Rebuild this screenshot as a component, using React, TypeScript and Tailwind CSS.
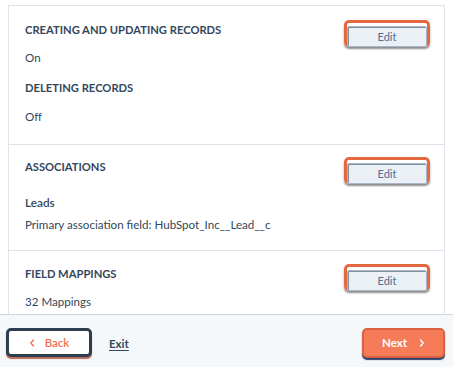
import React from "react";

function EditButton() {
  return (
    <div className="mt-[-2px] w-[86px] h-[27px] shrink-0 rounded-[5px] border-[3px] border-[#e5693f] shadow-[0_2px_2px_rgba(0,0,0,0.45)]">
      <button className="w-full h-full rounded-[2px] border border-[#a9b8c6] bg-[#eaf0f6] shadow-[inset_1px_1px_0_#7f8fa0] text-[11px] leading-none text-[#506e91]">
        Edit
      </button>
    </div>
  );
}

function Section({
  children,
  className = "",
}: {
  children: React.ReactNode;
  className?: string;
}) {
  return (
    <div className={`flex items-start pl-4 pr-[14px] ${className}`}>
      <div className="flex-1 min-w-0">{children}</div>
      <EditButton />
    </div>
  );
}

export default function App() {
  return (
    <div
      className="w-[453px] h-[367px] bg-white flex flex-col overflow-hidden text-[#33475b]"
      style={{ fontFamily: "Lato, 'Open Sans', sans-serif" }}
    >
      <div className="flex-1 min-h-0 pt-[5px] px-2">
        <div className="h-full border border-b-0 border-[#dfe3eb]">
          <Section className="h-[139px] pt-[16px] border-b border-[#dfe3eb]">
            <h3 className="text-[11.2px] font-bold leading-4">CREATING AND UPDATING RECORDS</h3>
            <p className="mt-3 text-[11.6px] leading-4">On</p>
            <h3 className="mt-[14px] text-[11.2px] font-bold leading-4">DELETING RECORDS</h3>
            <p className="mt-[13px] text-[11.6px] leading-4">Off</p>
          </Section>
          <Section className="h-[106px] pt-[14px] border-b border-[#dfe3eb]">
            <h3 className="text-[11.2px] font-bold leading-4">ASSOCIATIONS</h3>
            <p className="mt-5 text-[11.8px] font-semibold leading-4">Leads</p>
            <p className="mt-[6px] text-[11.6px] leading-4">Primary association field: HubSpot_Inc__Lead__c</p>
          </Section>
          <Section className="pt-[15px]">
            <h3 className="text-[11.2px] font-bold leading-4">FIELD MAPPINGS</h3>
            <p className="mt-3 text-[11.6px] leading-4">32 Mappings</p>
          </Section>
        </div>
      </div>
      <div className="h-[53px] shrink-0 border-t border-[#cbd6e2] bg-[#f5f8fa] flex items-start pl-[6px] pr-2 pt-[13px]">
        <button className="w-[86px] h-[29px] rounded-[5px] border-[3px] border-[#2d3e50] bg-white shadow-[0_2px_1px_#b86a55] flex items-center justify-center gap-[9px] text-[11.5px] font-semibold text-[#f2704d]">
          <svg width="7" height="8" viewBox="0 0 7 8" fill="none">
            <path d="M4.5 1 L1.8 4 L4.5 7" stroke="#f2704d" strokeWidth="1.4" strokeLinecap="round" strokeLinejoin="round" />
          </svg>
          Back
        </button>
        <a href="#" className="ml-[17px] mt-[8px] text-[11.5px] font-bold leading-4 underline underline-offset-2 text-[#33475b]">
          Exit
        </a>
        <button className="ml-auto w-[83px] h-[30px] rounded-[5px] border-2 border-[#d8623f] bg-[#f67b58] shadow-[0_2px_1px_#2d3e6b] flex items-center justify-center gap-[11px] text-[11.5px] font-bold text-white">
          Next
          <svg width="7" height="8" viewBox="0 0 7 8" fill="none">
            <path d="M2.5 1 L5.2 4 L2.5 7" stroke="#ffffff" strokeWidth="1.4" strokeLinecap="round" strokeLinejoin="round" />
          </svg>
        </button>
      </div>
    </div>
  );
}
